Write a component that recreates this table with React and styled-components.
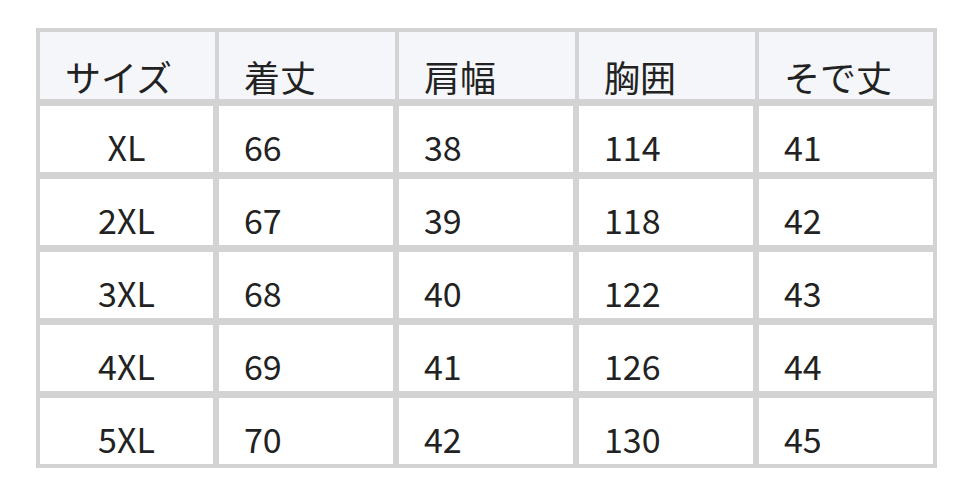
import React from "react";
import styled, { createGlobalStyle } from "styled-components";

const GlobalStyle = createGlobalStyle`
  html, body {
    margin: 0;
    padding: 0;
    background: #ffffff;
  }
  body {
    font-family: "Noto Sans CJK JP", "Noto Sans", sans-serif;
    color: #222222;
  }
`;

const Page = styled.div`
  padding: 28px 0 0 36px;
`;

const Table = styled.div`
  width: 901px;
  box-sizing: border-box;
  border: 4px solid #d3d3d3;
  background: #ffffff;
`;

const Row = styled.div`
  display: grid;
  grid-template-columns: 179px 180px 180px 180px 174px;
  height: ${(p) => p.$height}px;
  box-sizing: border-box;
  border-bottom: ${(p) => (p.$last ? 0 : 7)}px solid #d3d3d3;
`;

const Cell = styled.div`
  box-sizing: border-box;
  display: flex;
  align-items: flex-end;
  justify-content: ${(p) => (p.$center ? "center" : "flex-start")};
  padding: 0 0 ${(p) => p.$bottom}px ${(p) => (p.$center ? 0 : 25)}px;
  border-right: ${(p) => p.$line}px solid #d3d3d3;
  background: ${(p) => (p.$head ? "#f5f6fa" : "#ffffff")};
  font-size: ${(p) => (p.$head ? 36 : 34)}px;
  line-height: 1;
  white-space: nowrap;
`;

const headers = ["サイズ", "着丈", "肩幅", "胸囲", "そで丈"];

const rows = [
  ["XL", "66", "38", "114", "41"],
  ["2XL", "67", "39", "118", "42"],
  ["3XL", "68", "40", "122", "43"],
  ["4XL", "69", "41", "126", "44"],
  ["5XL", "70", "42", "130", "45"],
];

export default function App() {
  return (
    <>
      <GlobalStyle />
      <Page>
        <Table>
          <Row $height={74}>
            {headers.map((h, i) => (
              <Cell key={h} $head $bottom={5} $line={i === 4 ? 0 : 4}>
                {h}
              </Cell>
            ))}
          </Row>
          {rows.map((r, ri) => (
            <Row key={r[0]} $height={ri === rows.length - 1 ? 66 : 73} $last={ri === rows.length - 1}>
              {r.map((v, i) => (
                <Cell key={i} $center={i === 0} $bottom={8} $line={i === 4 ? 0 : 6}>
                  {v}
                </Cell>
              ))}
            </Row>
          ))}
        </Table>
      </Page>
    </>
  );
}
